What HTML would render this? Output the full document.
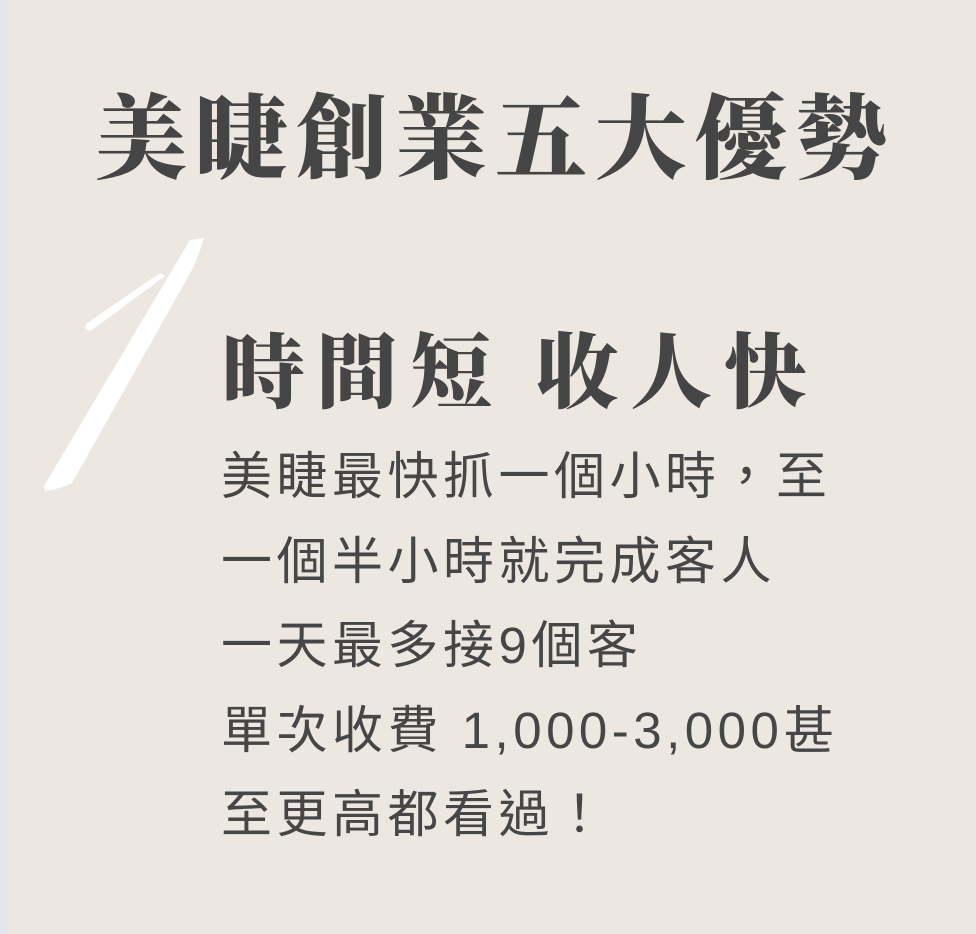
<!DOCTYPE html>
<html><head><meta charset="utf-8"><style>
html,body{margin:0;padding:0}
body{width:976px;height:934px;background:#ede7e1;position:relative;overflow:hidden;color:#454545}
.strip{position:absolute;left:0;top:0;width:8px;height:934px;background:#e4e6eb}
.t{position:absolute;left:95px;top:72px;font-family:"Noto Serif CJK SC","Noto Serif CJK TC",serif;font-weight:900;font-size:92px;line-height:120px;letter-spacing:8px;white-space:nowrap}
.h{position:absolute;left:222px;top:312px;font-family:"Noto Serif CJK SC",serif;font-weight:900;font-size:82px;line-height:110px;letter-spacing:12px;white-space:nowrap}
.b{position:absolute;left:221px;top:435px;font-family:"Liberation Sans","Noto Sans CJK TC",sans-serif;font-size:51px;line-height:84.5px;letter-spacing:4.5px;white-space:nowrap;color:#464646}
</style></head><body>
<div class="strip"></div>
<svg style="position:absolute;left:0;top:0" width="976" height="934">
<path d="M190 240 L204 238 Q200 252 193 268 L72 483 Q60 489 45 491 L44 486 Z" fill="#fff"/>
<path d="M86 324 L160 273 L165 276 L92 330 Q84 332 86 324 Z" fill="#fff"/>
</svg>
<div class="t">美睫創業五大優勢</div>
<div class="h">時間短 收人快</div>
<div class="b">美睫最快抓一個小時，至<br>一個半小時就完成客人<br>一天最多接9個客<br>單次收費 1,000-3,000甚<br>至更高都看過！</div>
</body></html>
